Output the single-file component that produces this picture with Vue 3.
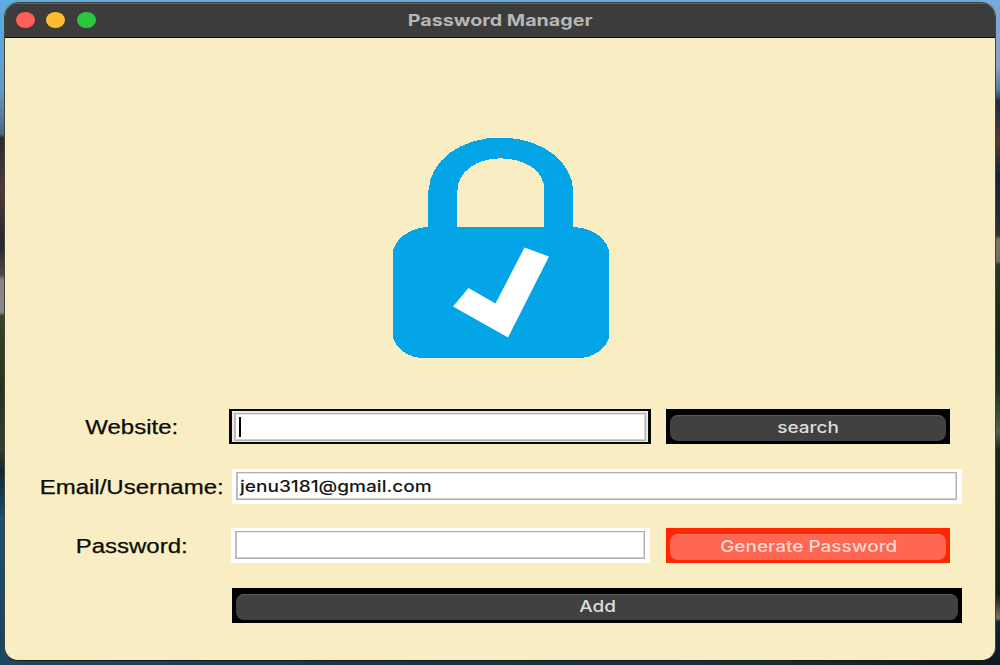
<script setup>
import { ref } from 'vue'
const email = ref('jenu3181@gmail.com')
</script>

<template>
  <div class="desktop">
    <div class="edge right"></div>
    <main class="window">
      <header class="titlebar">
        <div class="lights"><i class="red"></i><i class="amber"></i><i class="green"></i></div>
        <h1><span>Password Manager</span></h1>
      </header>
      <section class="content">
        <svg class="logo" viewBox="0 0 218 222" width="218" height="222">
          <path fill="#03a5e6" fill-rule="evenodd" shape-rendering="crispEdges" d="M36.4 90V54C38 23 69 .5 108.500 .5S180 23 181.400 54V90C201 90.500 217.400 103 217.400 118V199C215 211 202 221.400 184 221.400H34C16 221.400 3 211 .6 199V118C1 103 17 90.500 36.400 90ZM65.400 90V54C65.400 35 84 21.400 108 21.400S152.400 33 152.400 53V90Z" />
          <path fill="#fff" d="M132.500 110.500L157 119.500L116 200.500L61 169.500L76.500 151L103.500 166.500Z" />
        </svg>
        <div class="row website">
          <label><span>Website:</span></label>
          <div class="field focused"><div class="inner"><i class="caret"></i></div></div>
          <button class="short"><b><span>search</span></b></button>
        </div>
        <div class="row email">
          <label><span>Email/Username:</span></label>
          <div class="field"><div class="inner"><span>{{ email }}</span></div></div>
        </div>
        <div class="row password">
          <label><span>Password:</span></label>
          <div class="field"><div class="inner"></div></div>
          <button class="short danger"><b><span>Generate Password</span></b></button>
        </div>
        <div class="row add">
          <button><b><span>Add</span></b></button>
        </div>
      </section>
    </main>
  </div>
</template>

<style>
html, body { margin: 0; overflow: hidden; }
</style>

<style scoped>
* { box-sizing: border-box; }
.desktop {
  position: relative;
  width: 1000px;
  height: 665px;
  padding: 2px 4px 4px;
  overflow: hidden;
  background:
    linear-gradient(#5faee0, #62a5d8) 0 0 / 100% 20px no-repeat,
    linear-gradient(90deg, #1c4862, #14354a 40%, #172f3b 75%, #0c171d) 0 645px / 100% 20px no-repeat,
    linear-gradient(#59aee5 0, #6599c4 90px, #50697e 134px, #2b2a31 138px, #533a35 190px, #24262f 245px, #5b4440 275px, #888684 280px, #8a8984 312px, #3c4520 316px, #27331d 390px, #343f2b 450px, #102632 470px, #1c5270 520px, #17425b 665px);
}
.edge.right {
  position: absolute;
  right: 0;
  top: 0;
  width: 20px;
  height: 665px;
  background: linear-gradient(#79a9db 0, #8ea4c6 65px, #557b9c 90px, #1a2b43 102px, #4b3d38 140px, #172433 175px, #2b3039 235px, #78746f 240px, #716e69 261px, #283725 265px, #17251d 340px, #1c3328 390px, #53614e 432px, #18271d 450px, #111f17 595px, #75716a 618px, #14242c 622px, #0d1a22 665px);
}
.window {
  position: relative;
  height: 659px;
  border: 1px solid #41423a;
  border-bottom-color: #171a18;
  border-radius: 15px 15px 14px 14px;
  overflow: hidden;
  background: #f8edc3;
  font-family: Inter, sans-serif;
}
.titlebar {
  display: grid;
  grid-template-columns: 160px 1fr 160px;
  align-items: center;
  height: 35px;
  padding-bottom: 2px;
  background: #3b3c3b;
  border-top: 1px solid #616261;
  border-bottom: 1px solid #090a09;
}
.lights { display: flex; gap: 11.300px; padding-left: 11px; }
.lights i { width: 19px; height: 16px; border-radius: 50%; }
.red { background: #ff5f57; }
.amber { background: #febc2e; }
.green { background: #28c840; }
h1 { margin: 0; text-align: center; font-size: 16px; line-height: 20px; font-weight: 700; color: #b5b6b5; }
h1 span, label span, b span, .inner span { display: inline-block; white-space: nowrap; }
h1 span { transform: scaleX(1.23); }
.content { display: flex; flex-direction: column; }
.logo { margin: 99px 0 50px 387px; }
.row { display: flex; height: 35px; margin-bottom: 24.600px; }
label {
  display: flex;
  align-items: center;
  justify-content: center;
  flex: none;
  width: 224px;
  padding: 1px 0 0 29px;
  font: 20px/24px "Liberation Sans", Arial, sans-serif;
  color: #0c0c08;
  -webkit-text-stroke: .25px #0c0c08;
}
label span { transform: scaleX(1.2); }
.field { padding: 3px 5px 4px 4px; background: #fff; }
.inner {
  display: flex;
  align-items: center;
  height: 28px;
  border: 1px solid #b0b0b0;
  border-left: 2px solid #bdbdbd;
  box-shadow: inset 0 1px #e8e8e8, inset 0 -1px #cfcfcf, inset -1px 0 #d8d8d8;
  background: #fff;
  color: #151515;
  font-size: 16px;
  font-weight: 500;
}
.inner span { margin-left: 2px; transform: scaleX(1.19); transform-origin: left; }
.email .inner { padding-top: 1px; }
.focused { padding: 1px; border: 2px solid #080806; border-left-width: 3px; border-right-width: 3px; background: #e9e9e9; }
.focused .inner { height: 28px; margin: 1px 1px 0; }
.caret { width: 1.500px; height: 20px; margin-left: 3px; background: #000; }
.website .field { width: 422px; }
.website .short { margin-left: 15.300px; }
.email .field { width: 730px; margin-left: 3.400px; }
.password .field { width: 419px; margin-left: 2px; }
.password .short { margin-left: 16.300px; }
.add { padding-left: 227.400px; }
button {
  width: 730px;
  height: 35px;
  padding: 6px 4px 3px;
  border: 0;
  background: #000;
  font-family: Inter, sans-serif;
}
button.short { width: 284px; }
b {
  display: flex;
  align-items: center;
  justify-content: center;
  height: 26px;
  padding-bottom: 3px;
  border-radius: 8px;
  border-top: 1px solid #5b5b5b;
  background: #414141;
  color: #dedede;
  font-size: 16px;
  font-weight: 500;
}
b span { transform: scaleX(1.185); }
.danger { background: #ff2600; }
.danger b { background: #ff6752; border-color: #ff7866; color: #ffd8d2; }
</style>
